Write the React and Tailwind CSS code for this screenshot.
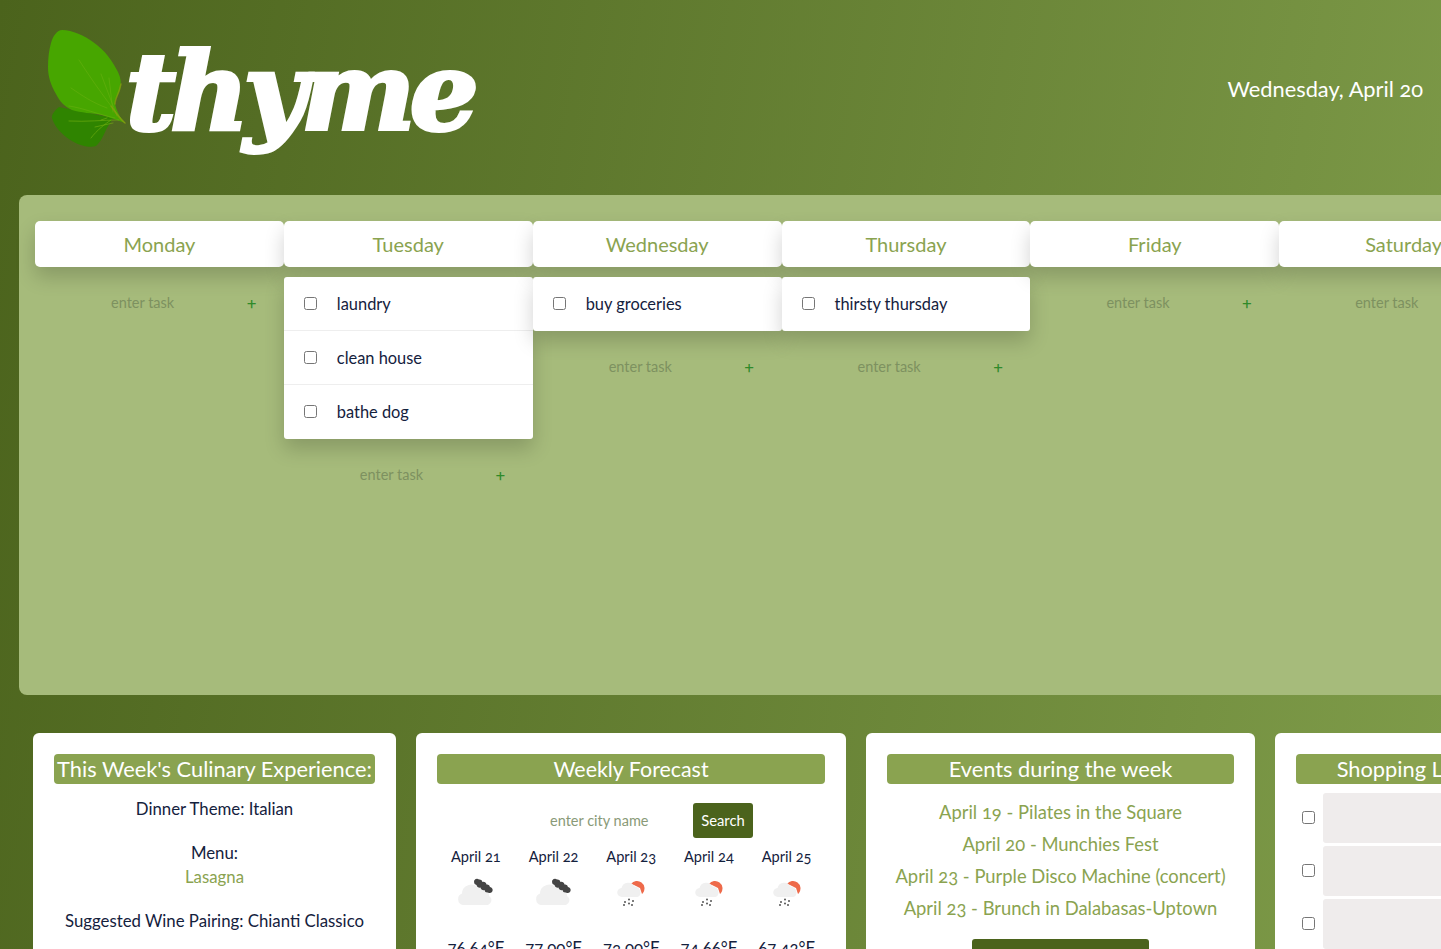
const F = "font-['Lato','Noto_Sans',sans-serif] oldstyle-nums";

function Cloudy() {
  return (
    <svg width="40" height="30" viewBox="0 0 40 30" className="block translate-x-[1px]">
      <path d="M6 27a6 6 0 0 1-1-11.500A9 9 0 0 1 21 10a8 8 0 0 1 11 8 5 5 0 0 1-1 9z" fill="#f0f0f0" />
      <path d="M17 4a3 3 0 0 1 5-2.500a3 3 0 0 1 3.500 2.500a3 3 0 0 1 4 2.500a3 3 0 0 1 3.500 2.500a3 3 0 0 1 2.500 4a3 3 0 0 1-4.500 1.500a3 3 0 0 1-3.500-2.500a3 3 0 0 1-4-2.500a3 3 0 0 1-4-2.500a3 3 0 0 1-2.500-3z" fill="#444444" />
    </svg>
  );
}
function Rainy() {
  return (
    <svg width="30" height="30" viewBox="0 0 30 30" className="block translate-x-[1px]">
      <path d="M14 6a7.500 7.500 0 1 1 12 9l-1 1-2-6-6-3z" fill="#ee6a4a" />
      <path d="M5 19a4.500 4.500 0 0 1-.5-9A7 7 0 0 1 17.500 8.500a6 6 0 0 1 6 6 4.500 4.500 0 0 1-3 4.500z" fill="#f0f0f0" />
      <g fill="#555555">
        <circle cx="12" cy="21.500" r="1" /><circle cx="16" cy="23" r="1" /><circle cx="8" cy="24" r="1" />
        <circle cx="12" cy="25.500" r="1" /><circle cx="7" cy="27" r="1" /><circle cx="15" cy="27" r="1" />
      </g>
    </svg>
  );
}
function Logo() {
  return (
    <div className="relative w-[430px] h-[125px]">
      <svg width="90" height="125" viewBox="0 0 90 125" className="absolute -left-[1px] top-0">
        <path d="M12 79C6 84 4 88 5.300 91C8 99 15 107 25 113C33 118 44 120 49 118C54 114 57 106 60 100L66 90Z" fill="#2f8400" />
        <path d="M15.300 2C25 2 38 8 46 14C58 22 66 34 71 44C74 50 74.500 56 73 62C71 68 68 70 68 75C69 82 73 90 78 95C70 92 62 89 55 87C45 85 34 85 25 82C17 78 13 74 9 66C4 57 1 49 1 39C1 30 2 22 4 15C6 8 10 2 15.300 2Z" fill="#47a600" />
        <g fill="none" strokeLinecap="round">
          <path d="M78 95C68 84 50 60 32 32M66 84L62 50M70 88L54 46M60 80C44 74 36 68 24 60M68 90C50 86 36 80 22 78" stroke="#72b414" strokeWidth="1" opacity="0.45" />
          <path d="M78 95C72 90 68 84 64 78M74 56C72 66 68 70 68 76" stroke="#8a9e10" strokeWidth="1.500" opacity="0.7" />
          <path d="M72 92C55 92 40 94 22 93M64 92C58 96 50 102 44 110M60 90L54 92M66 95L48 99" stroke="#74b010" strokeWidth="1" opacity="0.6" />
        </g>
      </svg>
      <span className="absolute left-[78px] top-[1px] origin-left scale-x-[1.015] text-white font-['DejaVu_Serif',serif] font-bold italic text-[106px] leading-[125px] tracking-[-5px] [-webkit-text-stroke:4px_white] whitespace-nowrap lining-nums">thyme</span>
    </div>
  );
}
function Day({ name, tasks }) {
  return (
    <div className="w-[248.850px] shrink-0 flex flex-col">
      <div className="h-[46px] bg-white rounded-[5px] flex items-center justify-center text-[20px] text-[#8aa350] shadow-[0_10px_20px_rgba(0,0,0,0.18)]">{name}</div>
      {tasks.length > 0 && (
        <div className="mt-[10px] bg-white rounded-[3px] shadow-[0_10px_20px_rgba(0,0,0,0.18)]">
          {tasks.map((t, i) => (
            <div key={t} className={"h-[54px] flex items-center pl-[20px] border-b " + (i < tasks.length - 1 ? "border-[#eeeeee]" : "border-transparent")}>
              <input type="checkbox" readOnly className="w-[13px] h-[13px] m-0 mr-[20px]" />
              <span className="text-[16.400px] text-[#14213d] pt-[2px]">{t}</span>
            </div>
          ))}
        </div>
      )}
      <div className="relative h-[20px] mt-[26px]">
        <span className="absolute left-[76px] top-0 text-[14.500px] leading-[20px] text-[#7d9160]">enter task</span>
        <span className="absolute left-[210.500px] -top-[1px] w-[12px] text-center text-[18px] leading-[20px] text-[#2f8a2a]">+</span>
      </div>
    </div>
  );
}
function Title({ children, className = "text-[21.800px]" }) {
  return <div className={"h-[30px] bg-[#8aa350] rounded-[4px] flex items-center justify-center text-white leading-[30px] whitespace-nowrap " + className}>{children}</div>;
}
export default function App() {
  const forecast = [
    ["April 21", "76.64°F", Cloudy], ["April 22", "77.00°F", Cloudy], ["April 23", "73.00°F", Rainy], ["April 24", "74.66°F", Rainy], ["April 25", "67.42°F", Rainy],
  ];
  return (
    <div className={F + " h-[949px] w-full overflow-hidden bg-[linear-gradient(100deg,#4b631c_0%,#7f9c4a_100%)]"}>
      <header className="h-[195px] flex justify-between pl-[48px] pr-[18px]">
        <div className="pt-[28px]"><Logo /></div>
        <div className="pt-[74px] text-white text-[21.800px] leading-[30px]">Wednesday, April 20</div>
      </header>
      <section className="ml-[19px] w-[1800px] h-[500px] bg-[#a6bb7b] rounded-[8px] pl-[16px] pt-[26px] flex items-start">
        <Day name="Monday" tasks={[]} />
        <Day name="Tuesday" tasks={["laundry", "clean house", "bathe dog"]} />
        <Day name="Wednesday" tasks={["buy groceries"]} />
        <Day name="Thursday" tasks={["thirsty thursday"]} />
        <Day name="Friday" tasks={[]} />
        <Day name="Saturday" tasks={[]} />
        <Day name="Sunday" tasks={[]} />
      </section>
      <section className="mt-[38px] pl-[33px] flex gap-[20px] items-start w-[1800px]">
        <div className="w-[363px] h-[260px] bg-white rounded-[6px] px-[21px] pt-[21px] text-center text-[16.800px] text-[#14213d]">
          <Title>This Week's Culinary Experience:</Title>
          <p className="mt-[13px] leading-[24px]">Dinner Theme: Italian</p>
          <p className="mt-[20px] leading-[24px]">Menu:</p>
          <p className="leading-[24px] text-[#8aa350]">Lasagna</p>
          <p className="mt-[20px] leading-[24px]">Suggested Wine Pairing: Chianti Classico</p>
        </div>
        <div className="w-[430px] h-[260px] bg-white rounded-[6px] px-[21px] pt-[21px] text-center">
          <Title className="text-[21.400px]">Weekly Forecast</Title>
          <div className="mt-[19px] h-[35px] flex items-center">
            <span className="ml-[113px] w-[143px] text-left text-[14.500px] text-[#8a9a78]">enter city name</span>
            <span className="h-[35px] w-[60px] rounded-[3px] bg-[#4b631c] text-white text-[14.800px] flex items-center justify-center">Search</span>
          </div>
          <div className="mt-[9px] flex">
            {forecast.map(([d, t, Icon]) => (
              <div key={d} className="w-[77.700px] flex flex-col items-center shrink-0 text-[#14213d]">
                <span className="text-[14.600px] leading-[20px] whitespace-nowrap">{d}</span>
                <div className="h-[30px] mt-[11px] flex items-center justify-center"><Icon /></div>
                <span className="mt-[30px] text-[16.800px] leading-[20px] whitespace-nowrap">{t}</span>
              </div>
            ))}
          </div>
        </div>
        <div className="w-[389px] h-[260px] bg-white rounded-[6px] px-[21px] pt-[21px] text-center text-[18.400px] text-[#8aa350]">
          <Title>Events during the week</Title>
          <div className="mt-[12px] -mx-[10px] flex flex-col whitespace-nowrap">
            <p className="leading-[32px]">April 19 - Pilates in the Square</p>
            <p className="leading-[32px]">April 20 - Munchies Fest</p>
            <p className="leading-[32px]">April 23 - Purple Disco Machine (concert)</p>
            <p className="leading-[32px]">April 23 - Brunch in Dalabasas-Uptown</p>
          </div>
          <div className="mx-auto mt-[15px] w-[177px] h-[40px] bg-[#4b631c] rounded-[3px]" />
        </div>
        <div className="w-[252px] h-[260px] bg-white rounded-[6px] px-[21px] pt-[21px]">
          <Title>Shopping List</Title>
          <div className="mt-[9px] flex flex-col gap-[3px]">
            {[0, 1, 2].map((i) => (
              <div key={i} className="flex items-center">
                <input type="checkbox" readOnly className="w-[13px] h-[13px] m-0 ml-[6px] mr-[8px] -translate-y-[1px]" />
                <div className="h-[50px] flex-1 bg-[#efecec] rounded-[3px]" />
              </div>
            ))}
          </div>
        </div>
      </section>
    </div>
  );
}
